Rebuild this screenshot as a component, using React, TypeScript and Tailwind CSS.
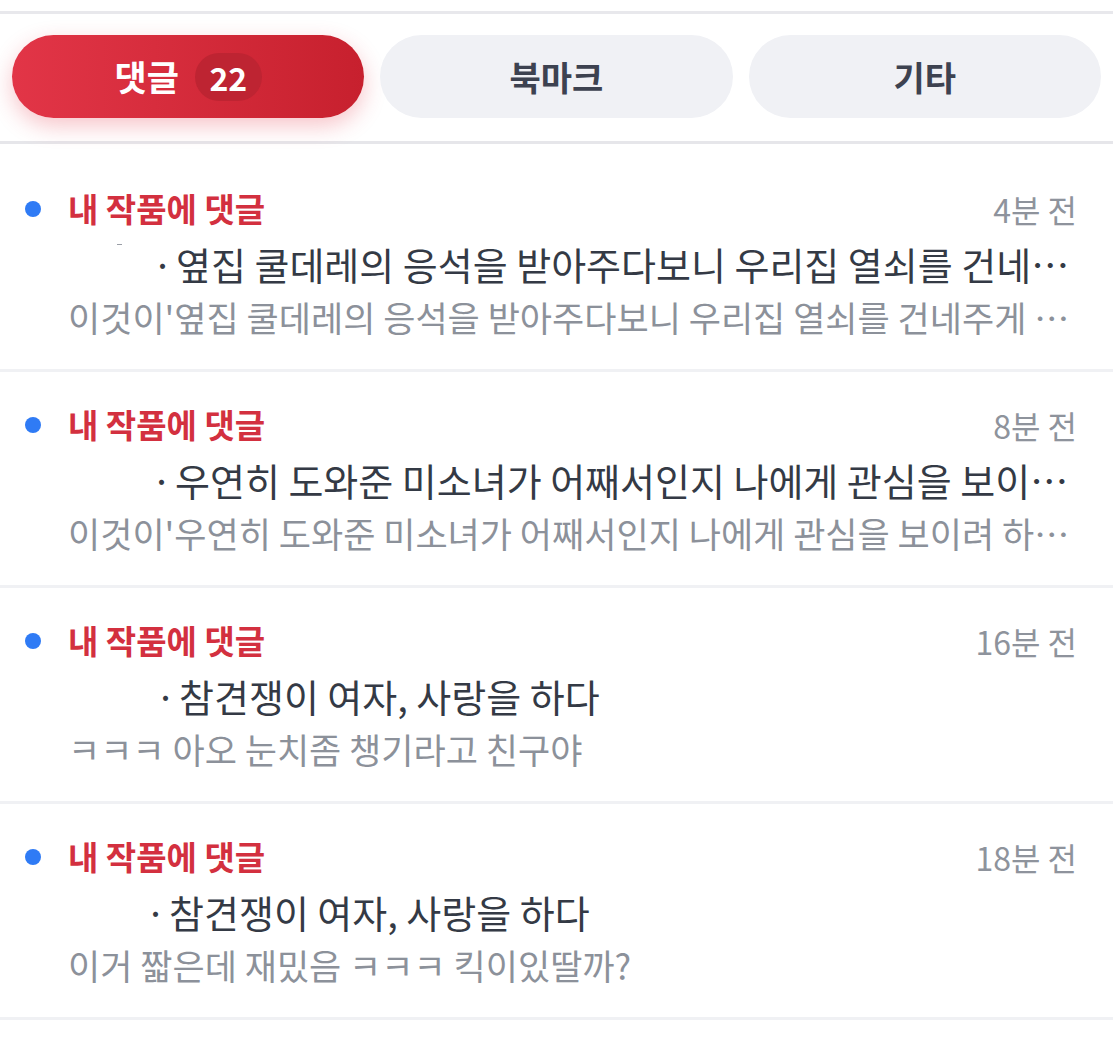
import React from 'react';

type Item = {
  time: string;
  gap: string;
  title: string;
  preview: string;
  dash?: boolean;
};

const items: Item[] = [
  {
    time: '4분 전',
    gap: 'w-[84px]',
    title: '옆집 쿨데레의 응석을 받아주다보니 우리집 열쇠를 건네주게 된 이야기',
    preview: "이것이'옆집 쿨데레의 응석을 받아주다보니 우리집 열쇠를 건네주게 …",
    dash: true,
  },
  {
    time: '8분 전',
    gap: 'w-[83px]',
    title: '우연히 도와준 미소녀가 어째서인지 나에게 관심을 보이려 한다',
    preview: "이것이'우연히 도와준 미소녀가 어째서인지 나에게 관심을 보이려 하는 이야기",
  },
  {
    time: '16분 전',
    gap: 'w-[87px]',
    title: '참견쟁이 여자, 사랑을 하다',
    preview: 'ㅋㅋㅋ 아오 눈치좀 챙기라고 친구야',
  },
  {
    time: '18분 전',
    gap: 'w-[77px]',
    title: '참견쟁이 여자, 사랑을 하다',
    preview: '이거 짧은데 재밌음 ㅋㅋㅋ 킥이있딸까?',
  },
];

const NoticeRow: React.FC<{ item: Item }> = ({ item }) => {
  return (
    <div className="border-b-[3px] border-[#f0f1f4] pl-[25px] pr-[36px] pt-[26px] pb-[25px]">
      <div className="flex items-center h-[54px]">
        <span className="w-4 h-4 rounded-full bg-[#2f7bf5] mr-[27px] shrink-0" />
        <span className="flex-1 text-[33px] font-bold text-[#d3303f]">내 작품에 댓글</span>
        <span className="text-[32px] text-[#8e939c]">{item.time}</span>
      </div>
      <div className="flex items-center h-[54px] pl-[43px] text-[38px] text-[#343a45] min-w-0">
        <span className={`${item.gap} shrink-0 relative h-full`}>
          {item.dash && <span className="absolute left-[49px] top-[8px] w-[5px] h-[1px] bg-[#9a9ea6]" />}
        </span>
        <span className="w-[24px] shrink-0 whitespace-nowrap">·</span>
        <span className="truncate">{item.title}</span>
      </div>
      <div className="h-[54px] flex items-center pl-[43px] text-[35px] text-[#8c919a] min-w-0">
        <span className="truncate">{item.preview}</span>
      </div>
    </div>
  );
};

const App: React.FC = () => {
  return (
    <div className="min-h-screen bg-white font-['Noto_Sans_CJK_KR','Noto_Sans',sans-serif]">
      <div className="h-[11px]" />
      <div className="border-t-[3px] border-b-[3px] border-t-[#e8e8ec] border-b-[#e6e6ea] pt-[21px] pb-[23px] px-3">
        <div className="flex gap-4">
          <button className="flex-1 h-[83px] rounded-full bg-gradient-to-r from-[#e23547] to-[#c7202e] shadow-[0_8px_22px_rgba(225,45,65,0.28)] flex items-center justify-center gap-4 text-white">
            <span className="text-[35px] font-bold">댓글</span>
            <span className="h-[48px] min-w-[67px] px-3 rounded-full bg-[#be2432] flex items-center justify-center text-[32px] font-bold">
              22
            </span>
          </button>
          <button className="flex-1 h-[83px] rounded-full bg-[#f0f1f5] text-[#3d4250] text-[34px] font-bold flex items-center justify-center">
            북마크
          </button>
          <button className="flex-1 h-[83px] rounded-full bg-[#f0f1f5] text-[#3d4250] text-[34px] font-bold flex items-center justify-center">
            기타
          </button>
        </div>
      </div>
      <div className="pt-3">
        {items.map((item, i) => (
          <NoticeRow key={i} item={item} />
        ))}
      </div>
    </div>
  );
};

export default App;
